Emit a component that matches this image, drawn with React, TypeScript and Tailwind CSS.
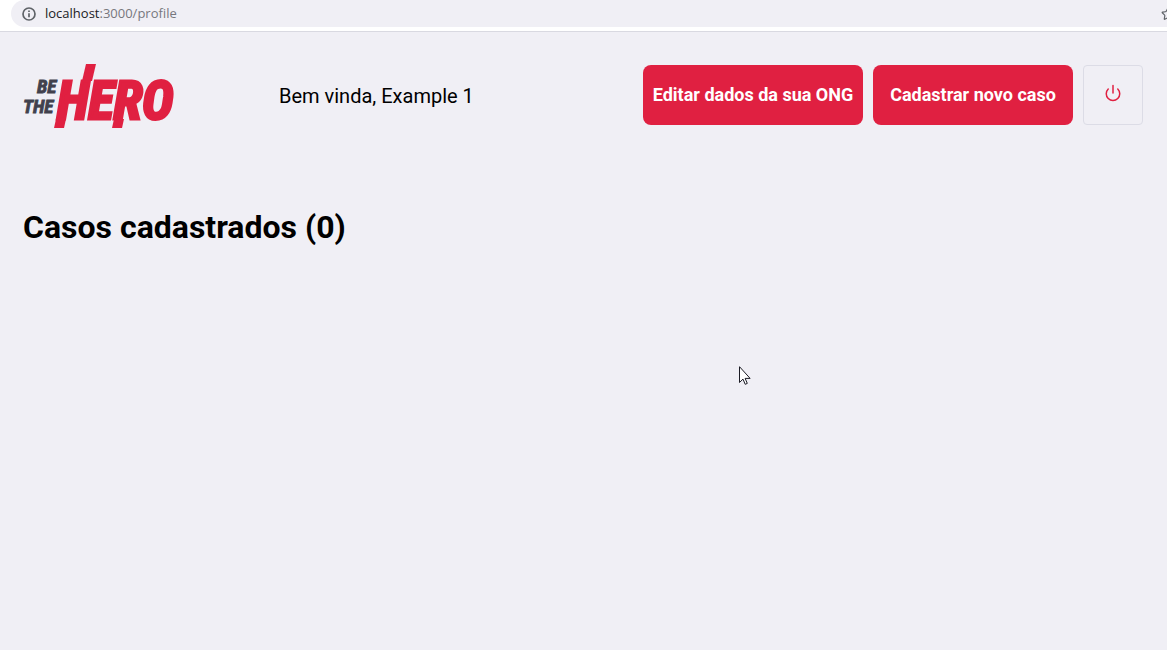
import { Star } from "lucide-react";

function AddressBar() {
  return (
    <div className="flex h-8 items-start overflow-hidden border-b border-[#d9d9e1] bg-white pl-[11px]">
      <div className="flex h-[27px] grow items-center rounded-l-full bg-[#f0eff5] pl-[11px]">
        <svg viewBox="0 0 14 14" className="size-[14px] shrink-0" fill="none" stroke="#5f6368" strokeWidth="1.7" aria-hidden="true">
          <circle cx="7" cy="7" r="6" />
          <path d="M7 6.2v4M7 3.4v1.6" />
        </svg>
        <div className="grow pb-px pl-[9px] font-['Open_Sans',sans-serif] text-[13px] leading-5 text-[#77777d]">
          <span className="text-[#202124]">localhost</span>:3000/profile
        </div>
        <button type="button" aria-label="Bookmark" className="-mr-2 shrink-0">
          <Star className="size-[14px] text-[#5f6368]" />
        </button>
      </div>
    </div>
  );
}

function Logo() {
  return (
    <svg viewBox="0 0 152 64" className="h-16 w-[152px] shrink-0 overflow-visible" role="img" aria-label="Be The Hero">
      <g className="font-['Liberation_Sans_Narrow','Roboto_Condensed',sans-serif] font-bold italic">
        <g fill="#41414d" stroke="#41414d" strokeWidth="0.8" fontSize="19">
          <text x="14" y="29">BE</text>
          <text x="0" y="49">THE</text>
        </g>
        <text x="34" y="55" fontSize="53" fill="#e02041" stroke="#e02041" strokeWidth="3">
          HERO
        </text>
      </g>
      <g fill="#e02041">
        <path d="M63 0h10l-4 17h-10z" />
        <path d="M33 55h10l-2 9h-10z" />
        <path d="M91 55h10l-2 9h-10z" />
      </g>
    </svg>
  );
}

const actionClass =
  "flex h-[60px] items-center justify-center rounded-lg bg-[#e02041] pb-0.5 text-[18px] font-bold text-white";

export default function App() {
  return (
    <div className="relative min-h-screen bg-[#f0eff5] font-[Roboto,sans-serif] text-black">
      <AddressBar />
      <main className="px-6 pt-8">
        <header className="-ml-px flex items-center">
          <Logo />
          <span className="ml-[104px] text-[20px] leading-6">Bem vinda, Example 1</span>
          <nav className="ml-auto flex gap-[10px] self-start pt-px">
            <a href="#editar" className={`w-[220px] ${actionClass}`}>
              Editar dados da sua ONG
            </a>
            <a href="#novo" className={`w-[200px] ${actionClass}`}>
              Cadastrar novo caso
            </a>
            <button
              type="button"
              aria-label="Sair"
              className="flex size-[60px] items-center justify-center rounded border border-[#dcdce6] pb-1"
            >
              <svg viewBox="0 0 24 24" className="size-[18px]" fill="none" stroke="#e02041" strokeWidth="2" strokeLinecap="round" strokeLinejoin="round" aria-hidden="true">
                <path d="M18.36 6.64a9 9 0 1 1-12.73 0M12 2v10" />
              </svg>
            </button>
          </nav>
        </header>
        <h1 className="-ml-px mt-20 text-[32px] leading-[38px] font-bold">Casos cadastrados (0)</h1>
      </main>
      <svg viewBox="0 0 12 20" className="absolute top-[366px] left-[739px] h-5 w-3" fill="white" stroke="#1b1b24" aria-hidden="true">
        <path d="M.5.7v15.8l3.5-3.4 2.2 5.2 2.1-.9-2.2-5h5z" />
      </svg>
    </div>
  );
}
